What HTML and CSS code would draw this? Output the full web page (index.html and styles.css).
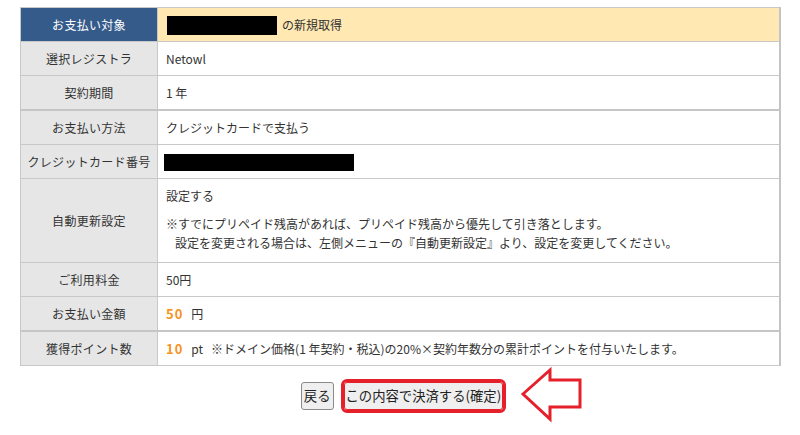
FILE: index.html
```html
<!DOCTYPE html>
<html lang="ja">
<head>
<meta charset="utf-8">
<title>確認</title>
<link rel="stylesheet" href="styles.css">
</head>
<body>
<div class="wrap">
  <table class="conf">
    <tr class="head">
      <th>お支払い対象</th>
      <td><span class="redact r-domain"></span><span class="after">の新規取得</span></td>
    </tr>
    <tr>
      <th>選択レジストラ</th>
      <td>Netowl</td>
    </tr>
    <tr>
      <th>契約期間</th>
      <td>1 年</td>
    </tr>
    <tr class="sep">
      <th>お支払い方法</th>
      <td>クレジットカードで支払う</td>
    </tr>
    <tr>
      <th>クレジットカード番号</th>
      <td><span class="redact r-card"></span></td>
    </tr>
    <tr class="auto">
      <th>自動更新設定</th>
      <td>
        <p class="p1">設定する</p>
        <p class="note">※すでにプリペイド残高があれば、プリペイド残高から優先して引き落とします。<br><span class="indent">設定を変更される場合は、左側メニューの『自動更新設定』より、設定を変更してください。</span></p>
      </td>
    </tr>
    <tr>
      <th>ご利用料金</th>
      <td>50円</td>
    </tr>
    <tr>
      <th>お支払い金額</th>
      <td><span class="num">50</span><span class="unit">円</span></td>
    </tr>
    <tr class="sep">
      <th>獲得ポイント数</th>
      <td><span class="num">10</span><span class="unit">pt</span><span class="pnote">※ドメイン価格(1 年契約・税込)の20%×契約年数分の累計ポイントを付与いたします。</span></td>
    </tr>
  </table>
</div>
<div class="actions">
  <button class="btn">戻る</button>
  <button class="btn confirm">この内容で決済する(確定)</button>
  <svg class="arrow" width="66" height="58" viewBox="0 0 66 58">
    <polygon points="4,28 31,4 31,14 61,14 61,41 31,41 31,53" fill="none" stroke="#e6202b" stroke-width="3" stroke-linejoin="miter"/>
  </svg>
</div>
</body>
</html>
```

FILE: styles.css
```css
html, body {
  margin: 0;
  padding: 0;
  background: #ffffff;
}
body {
  font-family: "Noto Sans CJK JP", "Noto Sans", sans-serif;
  color: #333333;
  width: 800px;
  height: 435px;
  overflow: hidden;
}
.wrap {
  padding: 7px 19px 0 20px;
}
.conf {
  width: 761px;
  border-collapse: collapse;
  font-size: 12px;
  border-right: 2px solid #c4c4c4;
}
.conf th,
.conf td {
  border: 1px solid #c8c8c8;
  height: 33px;
  padding: 0 8px;
  line-height: 18px;
  vertical-align: middle;
}
.conf th {
  width: 128px;
  background: #e6e6e6;
  font-weight: normal;
  text-align: center;
  white-space: nowrap;
  padding: 0 4px;
  letter-spacing: 0.3px;
}
.conf td {
  text-align: left;
  background: #ffffff;
}
.conf tr.head th {
  background: #355b8b;
  color: #ffffff;
  border-color: #c8c8c8;
}
.conf tr.head td {
  background: #ffe8b2;
}
.conf tr.sep th,
.conf tr.sep td {
  border-top: 2px solid #c6c6c6;
}
.redact {
  display: inline-block;
  background: #000000;
  vertical-align: middle;
}
.r-domain {
  width: 110px;
  height: 19px;
  margin-left: 1px;
}
.r-card {
  width: 190px;
  height: 17px;
  margin-left: -2px;
}
.after {
  margin-left: 5px;
  vertical-align: middle;
}
.conf tr.auto th,
.conf tr.auto td {
  height: auto;
}
.conf tr.auto td {
  padding-top: 7px;
  padding-bottom: 10px;
}
.p1 {
  margin: 0 0 8px 0;
  line-height: 20px;
}
.note {
  margin: 0;
  line-height: 19px;
}
.indent {
  padding-left: 9px;
}
.num {
  color: #f7931e;
  font-weight: bold;
  font-size: 13px;
  letter-spacing: 1px;
}
.unit {
  margin-left: 8px;
}
.pnote {
  margin-left: 8px;
}
.actions {
  position: relative;
  display: flex;
  justify-content: center;
  align-items: center;
  gap: 10px;
  padding-top: 16px;
  padding-left: 4px;
}
.btn {
  font-family: "Noto Sans CJK JP", "Noto Sans", sans-serif;
  font-size: 13.33px;
  color: #222222;
  background: #efefef;
  border: 1px solid #8a8a8a;
  border-radius: 3px;
  height: 28px;
  padding: 0 2px;
  line-height: 26px;
}
.confirm {
  outline: 3px solid #e6202b;
  outline-offset: 0;
  border-color: #e6202b;
  padding: 0 1px;
}
.arrow {
  position: absolute;
  left: 519px;
  top: 0;
}
```
